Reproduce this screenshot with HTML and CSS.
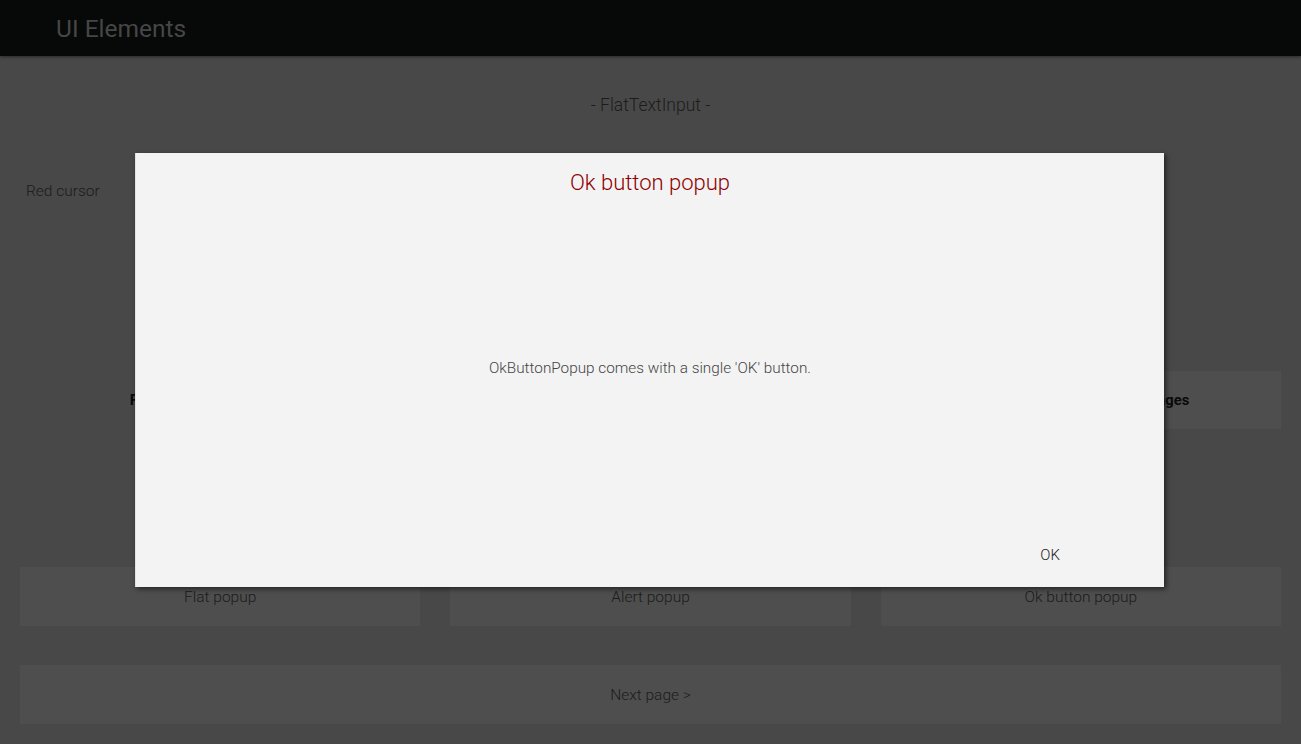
FILE: index.html
```html
<!DOCTYPE html>
<html>
<head>
<meta charset="utf-8">
<link rel="stylesheet" href="styles.css">
</head>
<body>
<header class="topbar"><span class="app-title">UI Elements</span></header>
<main class="content">
  <div class="section-title">- FlatTextInput -</div>
  <div class="input-row"><span class="input-label">Red cursor</span></div>
  <div class="grid bold-row">
    <div class="cell plain">Flat and bordered widgets</div>
    <div class="cell plain">Labels</div>
    <div class="cell btn">Buttons showing custom images</div>
  </div>
  <div class="grid popup-row">
    <div class="cell btn">Flat popup</div>
    <div class="cell btn">Alert popup</div>
    <div class="cell btn">Ok button popup</div>
  </div>
  <div class="next btn">Next page &gt;</div>
</main>
<div class="popup">
  <div class="popup-title">Ok button popup</div>
  <div class="popup-body">OkButtonPopup comes with a single 'OK' button.</div>
  <div class="popup-actions"><span class="ok">OK</span></div>
</div>
</body>
</html>
```
FILE: styles.css
```css
html, body {
  margin: 0;
  padding: 0;
}
body {
  width: 1301px;
  height: 744px;
  overflow: hidden;
  background: #484848;
  font-family: Roboto, "Liberation Sans", sans-serif;
  font-weight: 300;
  color: #1b1b1b;
  position: relative;
}
.topbar {
  height: 56px;
  background: #070808;
  box-shadow: 0 1px 3px rgba(0,0,0,0.45);
  display: flex;
  align-items: center;
  padding-left: 56px;
  position: relative;
}
.app-title {
  font-size: 24.5px;
  font-weight: 400;
  color: #464646;
}
.content {
  padding: 0 20px;
}
.section-title {
  text-align: center;
  font-size: 17.5px;
  margin-top: 38px;
  line-height: 22px;
  color: #1c1c1c;
}
.input-row {
  margin-top: 63px;
  height: 24px;
  display: flex;
  align-items: center;
  padding-left: 6px;
}
.input-label {
  font-size: 15.5px;
}
.grid {
  display: grid;
  grid-template-columns: 1fr 1fr 1fr;
  column-gap: 30px;
}
.cell {
  height: 58px;
  display: flex;
  align-items: center;
  justify-content: center;
  font-size: 15.5px;
  white-space: nowrap;
}
.bold-row {
  margin-top: 168px;
}
.bold-row .cell {
  font-weight: 700;
  font-size: 15.5px;
  color: #0a0a0a;
}
.bold-row .cell.btn {
  font-size: 14.8px;
}
.btn {
  background: #4e4e4e;
}
.popup-row {
  margin-top: 138px;
}
.popup-row .cell {
  height: 59px;
}
.next {
  margin-top: 39px;
  height: 59px;
  display: flex;
  align-items: center;
  justify-content: center;
  font-size: 15.5px;
}
.popup {
  position: absolute;
  left: 135px;
  top: 153px;
  width: 1029px;
  height: 434px;
  background: #f3f3f3;
  box-shadow: 2px 2px 5px rgba(0,0,0,0.55);
  border-left: 1px solid #e2e2e2;
  box-sizing: border-box;
  display: flex;
  flex-direction: column;
}
.popup-title {
  text-align: center;
  color: #8e0000;
  font-size: 22px;
  margin-top: 17px;
  line-height: 26px;
}
.popup-body {
  flex: 1;
  display: flex;
  align-items: center;
  justify-content: center;
  font-size: 15.3px;
  color: #454545;
  padding-top: 14px;
}
.popup-actions {
  height: 58px;
  display: flex;
  justify-content: flex-end;
  align-items: center;
  padding-right: 104px;
  padding-bottom: 3px;
}
.ok {
  font-size: 15px;
  color: #1b1b1b;
}
```
